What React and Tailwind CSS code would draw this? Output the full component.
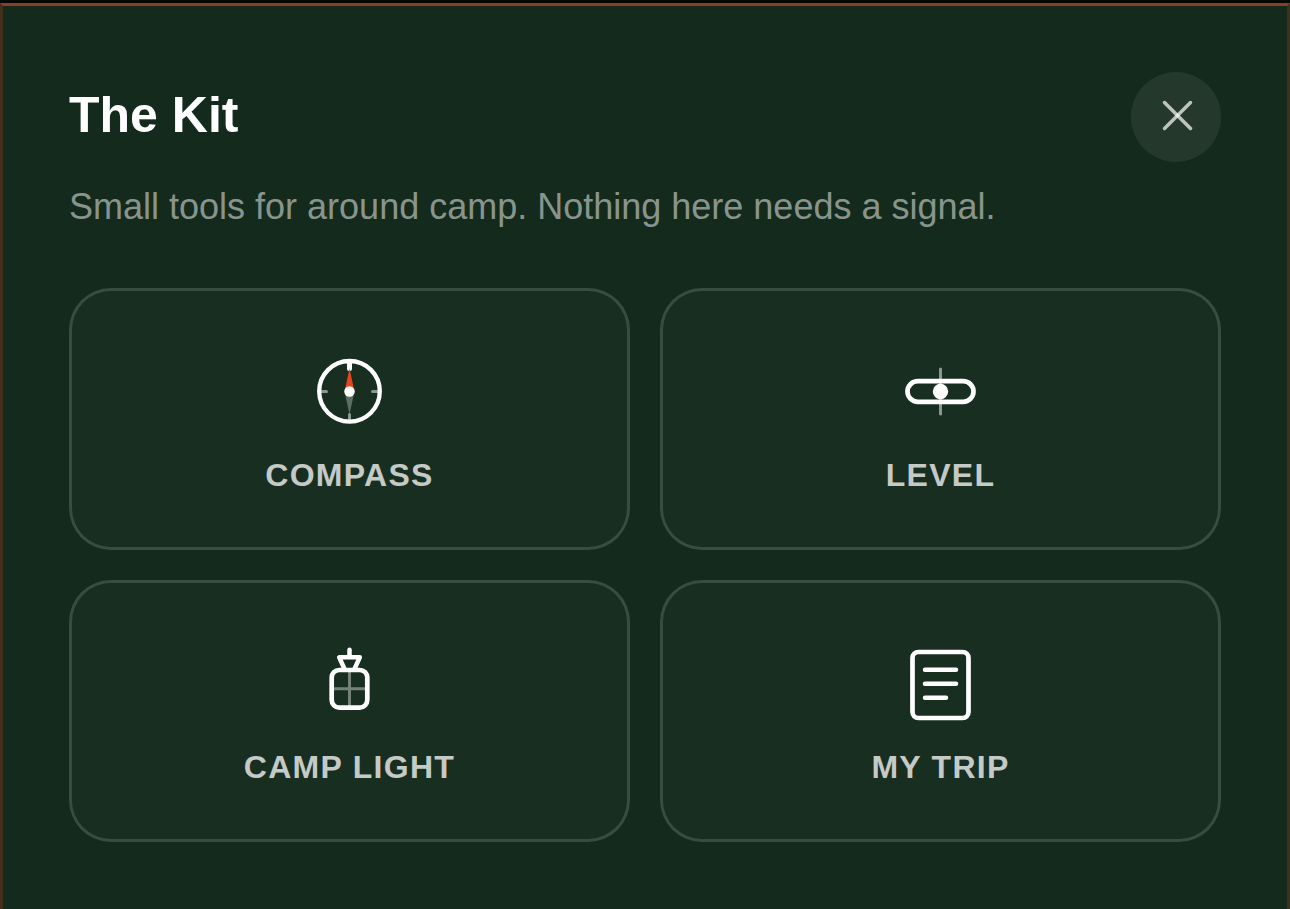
const CompassIcon = () => (
  <svg className="size-[84px]" viewBox="0.5 0 84 84" fill="none" stroke="white" strokeLinecap="round" aria-hidden="true">
    <circle cx="42" cy="42.3" r="30.3" strokeWidth="4.3" />
    <path d="M42 12.5V19.5" strokeWidth="5" />
    <path d="M42 65.5V72.5M12 42.5H19M65 42.5H72" strokeWidth="3" opacity="0.5" />
    <path d="M42 19.5L47 42.5H37Z" fill="#e8441c" stroke="none" />
    <path d="M42 65.5L47 42.5H37Z" fill="white" fillOpacity="0.3" stroke="none" />
    <circle cx="42" cy="42.5" r="5.2" fill="white" stroke="none" />
  </svg>
)

const LevelIcon = () => (
  <svg className="size-[84px]" viewBox="0.5 0 84 84" fill="none" stroke="white" strokeLinecap="round" aria-hidden="true">
    <path d="M42 20V65" strokeWidth="3" opacity="0.5" />
    <rect x="9" y="32.2" width="66" height="20.6" rx="10.3" strokeWidth="4.7" />
    <circle cx="42" cy="42.5" r="7.7" fill="white" stroke="none" />
  </svg>
)

const CampLightIcon = () => (
  <svg className="size-[84px]" viewBox="0.5 0 84 84" fill="none" stroke="white" strokeLinecap="round" strokeLinejoin="round" aria-hidden="true">
    <path d="M42 29V67M24 47.7H60" strokeWidth="3" opacity="0.4" />
    <rect x="24.2" y="29" width="35.6" height="37.6" rx="7.5" strokeWidth="4.7" />
    <path d="M37 28L31.7 16.3H52.3L47 28M42 8.7V16" strokeWidth="4.5" />
  </svg>
)

const TripIcon = () => (
  <svg className="size-[84px]" viewBox="0.5 0 84 84" fill="none" stroke="white" strokeLinecap="round" aria-hidden="true">
    <rect x="14" y="11" width="56" height="66" rx="6" strokeWidth="4.7" />
    <path d="M26.5 28.7H57.5M26.5 42.7H57.5M26.5 56.7H47.5" strokeWidth="4.5" />
  </svg>
)

const TOOLS = [
  { label: 'Compass', icon: CompassIcon },
  { label: 'Level', icon: LevelIcon },
  { label: 'Camp Light', icon: CampLightIcon },
  { label: 'My Trip', icon: TripIcon }
]

const App = () => {
  return (
    <div className="flex flex-col min-h-screen pt-[3px] bg-[#050805] font-['Liberation_Sans',Arial,sans-serif]">
      <section className="grow border-x-[3px] border-t-[3px] border-x-[#432f1c] border-t-[#883e28] bg-[#132a1c] px-[66px] pt-[66px] pb-16">
        {/* Header */}
        <div className="flex items-start justify-between">
          <h1 className="pt-3 text-[50px] leading-[62px] font-bold text-white">The Kit</h1>
          <button
            type="button"
            aria-label="Close"
            className="size-[90px] rounded-full bg-white/7 cursor-pointer"
          >
            <svg viewBox="0 0 90 90" fill="none" stroke="white" strokeWidth="3.5" strokeLinecap="round" aria-hidden="true">
              <path d="M33.5 30.5L59.5 56.5" opacity="0.7" />
              <path d="M59.5 30.5L33.5 56.5" opacity="0.7" />
            </svg>
          </button>
        </div>
        <p className="mt-[25px] text-4xl text-white/50">Small tools for around camp. Nothing here needs a signal.</p>

        {/* Tools */}
        <div className="grid grid-cols-2 gap-[30px] mt-[61px]">
          {TOOLS.map((tool) => (
            <button
              key={tool.label}
              type="button"
              className="flex flex-col items-center gap-6 pt-[58px] pb-[54px] rounded-[42px] border-[3px] border-white/16 bg-white/2 bg-clip-padding cursor-pointer"
            >
              <tool.icon />
              <span className="text-[32px] leading-9 font-bold tracking-[0.04em] uppercase text-white/75">{tool.label}</span>
            </button>
          ))}
        </div>
      </section>
    </div>
  )
}

export default App
